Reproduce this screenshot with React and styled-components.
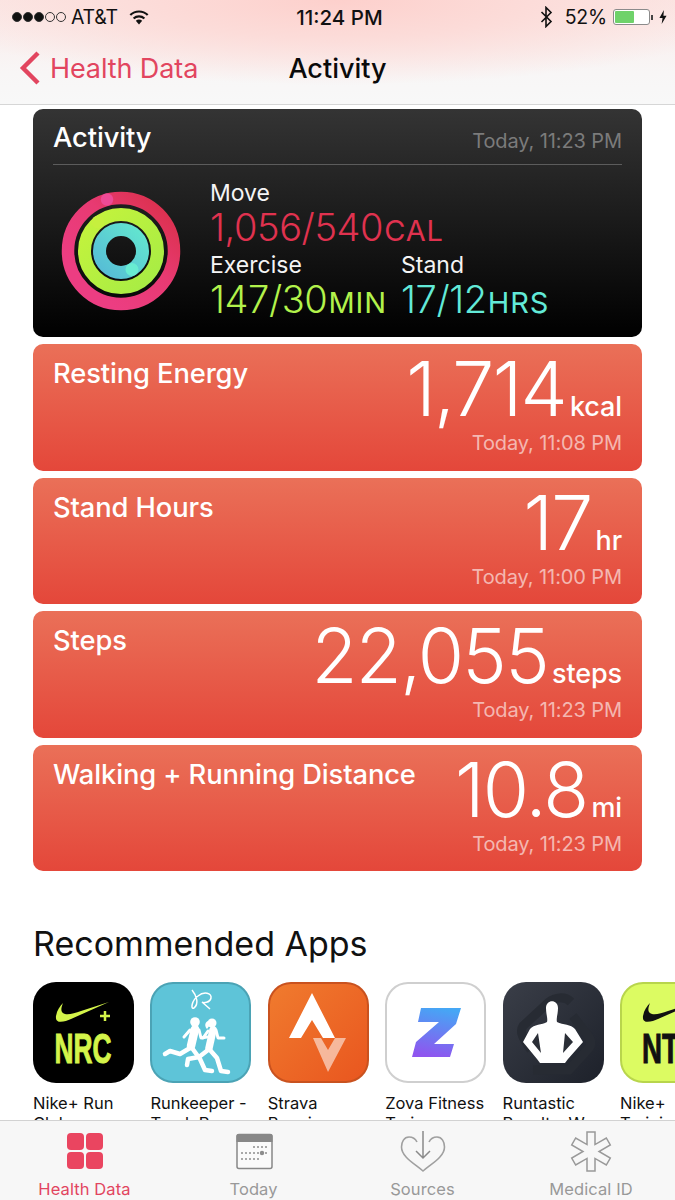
import React from "react";
import styled, { createGlobalStyle } from "styled-components";

const Global = createGlobalStyle`
  html, body { margin: 0; padding: 0; background: #fff; }
  body { font-family: Inter, "Liberation Sans", sans-serif; }
  * { box-sizing: border-box; }
`;

const Page = styled.div`
  width: 675px; height: 1200px; display: flex; flex-direction: column;
  overflow: hidden; background: #fff;
`;
const Header = styled.header`
  height: 105px; flex: none; border-bottom: 1px solid #d6d6d6;
  background: radial-gradient(ellipse 430px 85px at 50% 0, #fdd0cc 0%, #fcdcd9 45%, rgba(249,246,246,0) 100%), linear-gradient(#fbe9e7, #f8f6f6 70%, #f8f8f8);
  display: flex; flex-direction: column;
`;
const StatusBar = styled.div`
  height: 32px; padding: 2px 8px 0 12px; display: grid; grid-template-columns: 1fr auto 1fr;
  align-items: center; font-size: 19px; color: #111; letter-spacing: -0.2px;
`;
const StatusLeft = styled.div`display: flex; align-items: center;`;
const StatusRight = styled.div`display: flex; align-items: center; justify-content: flex-end;`;
const Clock = styled.div`font-weight: 500; font-size: 20.5px; letter-spacing: 0;`;
const Dot = styled.span`
  width: 10px; height: 10px; border-radius: 50%; margin-right: 1px;
  border: 1px solid #333; background: ${p => (p.$on ? "#111" : "transparent")};
`;
const Carrier = styled.span`margin: 0 11px 0 4px; font-size: 19.5px;`;
const Percent = styled.span`margin: 0 6px 0 12px; font-size: 19.5px;`;
const Battery = styled.div`
  width: 37px; height: 16px; border: 1px solid #8b8b8b; border-radius: 3px; padding: 1px; display: flex; background: #fff;
`;
const BatteryFill = styled.div`width: 19px; background: #6fd26a; border-radius: 1px;`;
const BatteryTip = styled.div`width: 2px; height: 5px; background: #444; margin: 0 6px 0 1px;`;
const NavBar = styled.div`
  flex: 1; display: grid; grid-template-columns: 1fr auto 1fr; align-items: center;
`;
const Back = styled.div`display: flex; align-items: center; gap: 8px; padding-left: 18px; color: #e2455f; font-size: 27px; letter-spacing: -0.1px;`;
const NavTitle = styled.div`font-size: 27px; font-weight: 500; color: #0a0a0a; letter-spacing: 0;`;

const Content = styled.main`flex: 1; min-height: 0; padding: 4px 0 0 33px;`;
const Cards = styled.div`width: 609px; display: flex; flex-direction: column; gap: 7px;`;

const ActivityCard = styled.section`
  height: 228px; border-radius: 10px; padding: 0 20px; color: #fff;
  background: linear-gradient(#343434, #000);
`;
const ActivityHead = styled.div`
  height: 56px; display: flex; justify-content: space-between; align-items: center;
  border-bottom: 1px solid #5c5c5c; padding-top: 2px;
`;
const CardTitle = styled.div`font-size: 27.3px; font-weight: 500; color: #fff; letter-spacing: -0.1px; white-space: nowrap;`;
const Stamp = styled.div`font-size: 20px; font-weight: 400; padding-top: ${p => p.$drop || 0}px; color: ${p => p.$c}; letter-spacing: -0.1px; white-space: nowrap;`;
const ActivityBody = styled.div`display: flex; align-items: flex-start; padding: 14px 0 0 8px;`;
const Rings = styled.svg`width: 120px; height: 120px; margin-top: 12px; flex: none;`;
const Stats = styled.div`margin-left: 29px; display: grid; grid-template-columns: auto auto; justify-content: start; column-gap: 14px;`;
const StatCell = styled.div`grid-column: ${p => p.$span ? "1 / 3" : "auto"};`;
const StatLabel = styled.div`font-size: 23px; line-height: 28px; height: 26px; color: #f4f4f4; font-weight: 400;`;
const StatValue = styled.div`
  font-size: 38px; line-height: 44px; height: 46px; font-weight: 300; color: ${p => p.$c}; white-space: nowrap; letter-spacing: -0.4px;
`;
const StatUnit = styled.span`font-size: 29px; font-weight: 400; letter-spacing: 0.9px; margin-left: 1px;`;

const MetricCard = styled.section`
  height: 126.6px; border-radius: 10px; padding: 0 20px; color: #fff;
  background: linear-gradient(#ea7058, #e4473a);
  display: flex; justify-content: space-between;
`;
const MetricTitle = styled(CardTitle)`padding-top: 13px;`;
const MetricRight = styled.div`display: flex; flex-direction: column; align-items: flex-end; padding-top: 2px;`;
const MetricValue = styled.div`display: flex; align-items: baseline; height: 85px; font-size: 75px; line-height: 86px; font-weight: 300; letter-spacing: -1.7px;`;
const MetricUnit = styled.span`font-size: 27px; font-weight: 500; margin-left: 4px; letter-spacing: -0.1px;`;

const SectionTitle = styled.h2`
  margin: 53px 0 18px; font-size: 34px; line-height: 40px; font-weight: 400; color: #111; letter-spacing: 0;
`;
const AppsRow = styled.div`display: flex; gap: 16.4px; width: 700px;`;
const AppItem = styled.div`width: 101px; flex: none;`;
const AppIcon = styled.div`
  width: 101px; height: 101px; border-radius: 23px; overflow: hidden; background: ${p => p.$bg};
  border: ${p => p.$bd ? `2px solid ${p.$bd}` : "none"};
`;
const IconArt = styled.svg`display: block; width: 100%; height: 100%;`;
const AppName = styled.div`
  margin-top: 10px; font-size: 16.5px; line-height: 20px; color: #111; letter-spacing: 0; white-space: nowrap; overflow: hidden;
`;

const TabBar = styled.nav`
  height: 80px; flex: none; position: relative; z-index: 1; background: #f7f7f7; border-top: 1px solid #d2d2d2;
  display: grid; grid-template-columns: 169px 169px 169px 168px;
`;
const Tab = styled.div`
  display: flex; flex-direction: column; align-items: center; color: ${p => p.$active ? "#e2455f" : "#999"};
  font-size: 16.5px; letter-spacing: 0.1px;
`;
const TabIcon = styled.svg`width: 50px; height: 50px; margin-top: 7px; margin-bottom: 1px;`;

const Chevron = () => (
  <svg width="24" height="36" viewBox="0 0 24 36">
    <path d="M20 3 L5 18 L20 33" fill="none" stroke="#e2455f" strokeWidth="4.4" />
  </svg>
);
const Wifi = () => (
  <svg width="20" height="15" viewBox="0 0 20 15">
    <path d="M10 14.5 L6.8 10.8 A5 5 0 0 1 13.2 10.8 Z" fill="#111" />
    <path d="M4.6 8.5 A8 8 0 0 1 15.4 8.5 M1.3 5 A12.6 12.6 0 0 1 18.7 5" stroke="#111" strokeWidth="2.2" fill="none" />
  </svg>
);
const Bluetooth = () => (
  <svg width="13" height="22" viewBox="0 0 13 22">
    <path d="M1.5 6 L11 15.5 L6 20.5 V1.5 L11 6.5 L1.5 16" fill="none" stroke="#111" strokeWidth="1.6" />
  </svg>
);
const Bolt = () => (
  <svg width="8" height="16" viewBox="0 0 9 16"><path d="M5.5 0 L0.5 9 H4 L3 16 L8.5 6.5 H5 Z" fill="#111" /></svg>
);

const ActivityRings = () => (
  <Rings viewBox="0 0 120 120">
    <defs>
      <linearGradient id="rr" x1="0.2" y1="0.8" x2="0.9" y2="0.1"><stop offset="0" stopColor="#ec3d82" /><stop offset="0.55" stopColor="#e83a72" /><stop offset="1" stopColor="#dc3150" /></linearGradient>
      <linearGradient id="gr" x1="0" y1="0" x2="1" y2="1"><stop offset="0" stopColor="#c5f33c" /><stop offset="1" stopColor="#a6ec45" /></linearGradient>
      <linearGradient id="br" x1="0" y1="1" x2="1" y2="0"><stop offset="0" stopColor="#56bcd6" /><stop offset="1" stopColor="#63e6cf" /></linearGradient>
    </defs>
    <circle cx="60" cy="60" r="53" fill="none" stroke="url(#rr)" strokeWidth="12.5" />
    <circle cx="46" cy="8.500" r="6.200" fill="#ee4a96" />
    <circle cx="60" cy="60" r="36.500" fill="none" stroke="url(#gr)" strokeWidth="13" />
    <circle cx="37" cy="31" r="6.500" fill="#c6f03e" />
    <circle cx="60" cy="60" r="21.500" fill="none" stroke="url(#br)" strokeWidth="13" />
    <circle cx="71" cy="78.500" r="6.500" fill="#68ecd2" />
  </Rings>
);

const SWOOSH = "M23 34 C24 28 27 24 30 21 C28 26 27 31 32 32 C36 33 42 31 48 29 L76 20 L38 37 C32 39.500 22 43 23 34 Z";

const NRCIcon = () => (
  <IconArt viewBox="0 0 101 101">
    <path d={SWOOSH} fill="#d4f44a" />
    <path d="M67 34 H77 M72 29 V39" stroke="#d4f44a" strokeWidth="2.500" />
    <text x="50" y="81" textAnchor="middle" fontFamily="Liberation Sans, sans-serif" fontWeight="700" fontSize="43" fill="#d4f44a" stroke="#d4f44a" strokeWidth="1" textLength="57" lengthAdjust="spacingAndGlyphs">NRC</text>
  </IconArt>
);
const RunkeeperIcon = () => (
  <IconArt viewBox="2 2 97 97">
    <path d="M42 8 C47 14 49 22 44 26 C40 28 42 18 48 14 C54 9 62 11 61 16 C60 21 53 21 52 20 L60 27" fill="none" stroke="#fff" strokeWidth="1.500" />
    <g fill="none" stroke="#fff" strokeLinecap="round" strokeLinejoin="round">
      <path d="M45 47 L41 64" strokeWidth="8.500" />
      <path d="M40 48 L34 55 M49 48 L51 56 L57 55" strokeWidth="3" />
      <path d="M40 66 L30 72 L20 69 L15 72" strokeWidth="4.500" />
      <path d="M42 66 L50 77 L55 88 L62 89" strokeWidth="4.500" />
      <path d="M63 48 L59 66" strokeWidth="7.500" />
      <path d="M58 49 L53 56 M66 48 L68 56 L74 56" strokeWidth="3" />
      <path d="M58 68 L49 75 L38 77 L37 83" strokeWidth="4.500" />
      <path d="M60 68 L67 76 L71 89 L78 90" strokeWidth="4.500" />
    </g>
    <circle cx="45" cy="40" r="4.800" fill="#fff" />
    <circle cx="62" cy="41" r="4.500" fill="#fff" />
    <path d="M58 39 C54 41 55 45 57 47 L60 43 Z" fill="#fff" />
  </IconArt>
);
const StravaIcon = () => (
  <IconArt viewBox="2 2 97 97">
    <path d="M44 11 L67 56 H55 L44 38 L33 56 H21 Z" fill="#fff" />
    <path d="M45 56 H53 L60 68 L67 56 H78 L60 90 Z" fill="#fff" fillOpacity=".55" />
  </IconArt>
);
const ZovaIcon = () => (
  <IconArt viewBox="2 2 97 97">
    <defs><linearGradient id="zg" x1="0.6" y1="0" x2="0.4" y2="1"><stop offset="0" stopColor="#45a7f5" /><stop offset="1" stopColor="#8f55ef" /></linearGradient></defs>
    <path d="M36 26 H76 L71 42 L49 62 H69 L65 75 H27 L31 60 L54 40 H33 Z" fill="url(#zg)" />
  </IconArt>
);
const RuntasticIcon = () => (
  <IconArt viewBox="0 0 101 101">
    <path d="M68 20 C62 14 52 15 46 20 L20 44 C16 50 20 56 28 68 M30 88 H66 L86 66 C90 60 86 54 82 50 L70 34" fill="none" stroke="#272b33" strokeWidth="9" />
    <path d="M43 26 C43 17 55 17 55 26 C55 32 53 37 54 40 C60 43 68 42 72 47 L80 60 L65 77 L62 81 H37 L34 77 L20 60 L27 47 C31 42 39 43 44 40 C45 37 43 32 43 26 Z" fill="#fff" />
    <path d="M35 51 L29 60 L38 71 Z M62 51 L70 60 L60 71 Z" fill="#2a2e36" />
  </IconArt>
);
const NTCIcon = () => (
  <IconArt viewBox="2 2 97 97">
    <path d={SWOOSH} fill="#111" />
    <text x="22" y="81" fontFamily="Liberation Sans, sans-serif" fontWeight="700" fontSize="43" fill="#111" stroke="#111" strokeWidth="1" textLength="57" lengthAdjust="spacingAndGlyphs">NTC</text>
  </IconArt>
);

const apps = [
  { name: "Nike+ Run", sub: "Club", bg: "#000", art: <NRCIcon /> },
  { name: "Runkeeper -", sub: "Track Run", bg: "#5ec4d8", bd: "#4ba3b5", art: <RunkeeperIcon /> },
  { name: "Strava", sub: "Running an", bg: "linear-gradient(135deg,#f07b2e,#e9561f)", bd: "#c9521f", art: <StravaIcon /> },
  { name: "Zova Fitness", sub: "Trainer", bg: "#fff", bd: "#cfcfcf", art: <ZovaIcon /> },
  { name: "Runtastic", sub: "Results: W", bg: "linear-gradient(135deg,#3a3e48,#1d212a)", art: <RuntasticIcon /> },
  { name: "Nike+", sub: "Training", bg: "#dcfb62", bd: "#b8d54c", art: <NTCIcon /> },
];

const metrics = [
  { title: "Resting Energy", value: "1,714", unit: "kcal", time: "Today, 11:08 PM" },
  { title: "Stand Hours", value: "17", unit: "hr", time: "Today, 11:00 PM" },
  { title: "Steps", value: "22,055", unit: "steps", time: "Today, 11:23 PM" },
  { title: "Walking + Running Distance", value: "10.8", unit: "mi", time: "Today, 11:23 PM" },
];

const todayDots = [[25,19],[29,19],[33,19],[37,19],[13,25],[17,25],[21,25],[25,25],[29,25],[37,25],[13,31],[17,31],[21,31],[25,31],[29,31]];

export default function App() {
  return (
    <Page>
      <Global />
      <Header>
        <StatusBar>
          <StatusLeft>
            <Dot $on /><Dot $on /><Dot $on /><Dot /><Dot />
            <Carrier>AT&amp;T</Carrier>
            <Wifi />
          </StatusLeft>
          <Clock>11:24 PM</Clock>
          <StatusRight>
            <Bluetooth />
            <Percent>52%</Percent>
            <Battery><BatteryFill /></Battery>
            <BatteryTip />
            <Bolt />
          </StatusRight>
        </StatusBar>
        <NavBar>
          <Back><Chevron />Health Data</Back>
          <NavTitle>Activity</NavTitle>
          <div />
        </NavBar>
      </Header>
      <Content>
        <Cards>
          <ActivityCard>
            <ActivityHead>
              <CardTitle>Activity</CardTitle>
              <Stamp $c="#7b7b7b" $drop={6}>Today, 11:23 PM</Stamp>
            </ActivityHead>
            <ActivityBody>
              <ActivityRings />
              <Stats>
                <StatCell $span>
                  <StatLabel>Move</StatLabel>
                  <StatValue $c="#e0324f">1,056/540<StatUnit>CAL</StatUnit></StatValue>
                </StatCell>
                <StatCell>
                  <StatLabel>Exercise</StatLabel>
                  <StatValue $c="#b2f24b">147/30<StatUnit>MIN</StatUnit></StatValue>
                </StatCell>
                <StatCell>
                  <StatLabel>Stand</StatLabel>
                  <StatValue $c="#62ead8">17/12<StatUnit>HRS</StatUnit></StatValue>
                </StatCell>
              </Stats>
            </ActivityBody>
          </ActivityCard>
          {metrics.map(m => (
            <MetricCard key={m.title}>
              <MetricTitle>{m.title}</MetricTitle>
              <MetricRight>
                <MetricValue>{m.value}<MetricUnit>{m.unit}</MetricUnit></MetricValue>
                <Stamp $c="rgba(255,255,255,.6)">{m.time}</Stamp>
              </MetricRight>
            </MetricCard>
          ))}
        </Cards>
        <SectionTitle>Recommended Apps</SectionTitle>
        <AppsRow>
          {apps.map(a => (
            <AppItem key={a.name}>
              <AppIcon $bg={a.bg} $bd={a.bd}>{a.art}</AppIcon>
              <AppName>{a.name}<br />{a.sub}</AppName>
            </AppItem>
          ))}
        </AppsRow>
      </Content>
      <TabBar>
        <Tab $active>
          <TabIcon viewBox="0 0 50 50">
            <g fill="#ea4560">
              <rect x="7" y="5" width="17" height="17" rx="4" /><rect x="26" y="5" width="17" height="17" rx="4" />
              <rect x="7" y="24" width="17" height="17" rx="4" /><rect x="26" y="24" width="17" height="17" rx="4" />
            </g>
          </TabIcon>
          Health Data
        </Tab>
        <Tab>
          <TabIcon viewBox="0 0 50 50">
            <rect x="8" y="6.500" width="35" height="34" rx="2" fill="#fafafa" stroke="#888" strokeWidth="1.500" />
            <path d="M7.500 8 a2 2 0 0 1 2 -2 h32 a2 2 0 0 1 2 2 v6 H7.500 Z" fill="#888" />
            <g fill="#8c8c8c">
              {todayDots.map(([x, y]) => <circle key={x + "-" + y} cx={x} cy={y} r="1" />)}
              <circle cx="33" cy="25" r="2.200" />
            </g>
          </TabIcon>
          Today
        </Tab>
        <Tab>
          <TabIcon viewBox="0 0 50 50">
            <path d="M19 14 C17 10 14 9 11 9 C6 9 3.500 14 3.500 19 C3.500 29 17 36 25 43 C33 36 46.500 29 46.500 19 C46.500 14 44 9 39 9 C36 9 33 10 31 14" fill="none" stroke="#a0a0a0" strokeWidth="1.600" />
            <path d="M25 3 V30 M18 23 L25 30 L32 23" fill="none" stroke="#8a8a8a" strokeWidth="1.500" />
          </TabIcon>
          Sources
        </Tab>
        <Tab>
          <TabIcon viewBox="0 0 50 50">
            <path d="M21 4 H29 V16.570 L40.300 10 L44.300 16.960 L33 23.500 L44.300 30.040 L40.300 37 L29 30.430 V43 H21 V30.430 L9.700 37 L5.700 30.040 L17 23.500 L5.700 16.960 L9.700 10 L21 16.570 Z" fill="none" stroke="#999" strokeWidth="1.500" />
          </TabIcon>
          Medical ID
        </Tab>
      </TabBar>
    </Page>
  );
}
